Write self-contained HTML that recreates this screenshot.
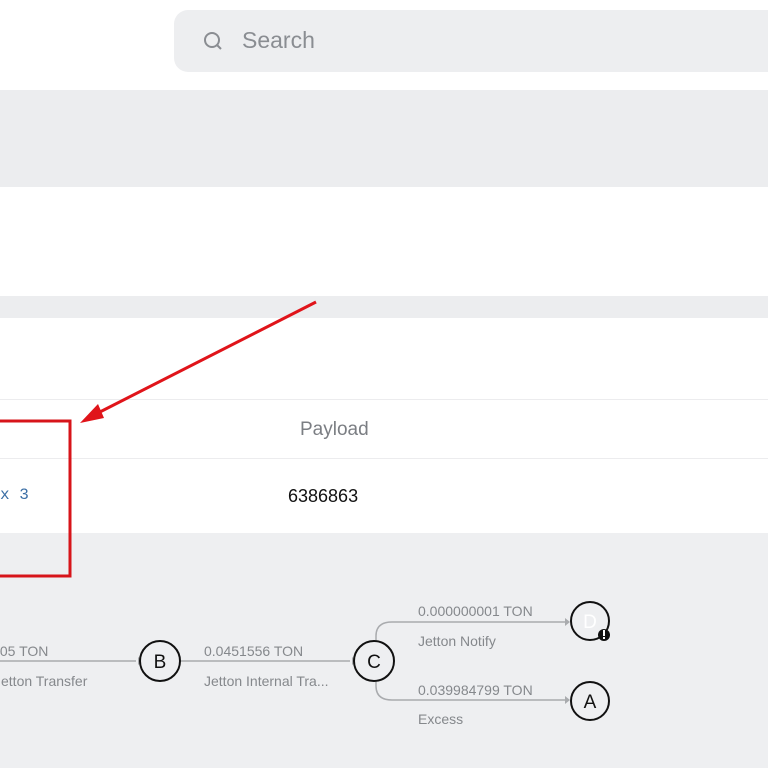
<!DOCTYPE html>
<html><head><style>
body{margin:0;width:768px;height:768px;overflow:hidden;background:#fff;font-family:"Liberation Sans",sans-serif;position:relative}
.a{position:absolute}
</style></head><body>
<div class="a" style="left:174px;top:10px;width:620px;height:62px;background:#edeef0;border-radius:14px"></div>
<svg class="a" style="left:202px;top:30px" width="22" height="22" viewBox="0 0 22 22"><circle cx="10" cy="10" r="7" fill="none" stroke="#8a8d92" stroke-width="2"/><line x1="15" y1="15" x2="19" y2="19" stroke="#8a8d92" stroke-width="2"/></svg>
<div class="a" style="left:242px;top:27px;font-size:23px;color:#8a8d92">Search</div>
<div class="a" style="left:0;top:90px;width:768px;height:97px;background:#ecedef"></div>
<div class="a" style="left:0;top:296px;width:768px;height:22px;background:#ecedef"></div>
<div class="a" style="left:0;top:399px;width:768px;height:1px;background:#ececee"></div>
<div class="a" style="left:0;top:458px;width:768px;height:1px;background:#ececee"></div>
<div class="a" style="left:300px;top:419px;font-size:19px;color:#7b7e83">Payload</div>
<div class="a" style="left:288px;top:486px;font-size:18px;color:#111">6386863</div>
<div class="a" style="left:0;top:486px;font-size:16px;color:#3a6ea5;font-family:'Liberation Mono',monospace">x&nbsp;3</div>
<div class="a" style="left:0;top:533px;width:768px;height:235px;background:#eeeff1"></div>
<svg class="a" style="left:0;top:0" width="768" height="768">
<g fill="none" stroke="#a9abae" stroke-width="1.5">
<line x1="0" y1="661" x2="136" y2="661"/><line x1="181" y1="661" x2="350" y2="661"/>
<path d="M376 645 L376 636 Q376 622 392 622 L566 622"/><path d="M376 677 L376 686 Q376 700 392 700 L566 700"/>
</g>
<g fill="#a9abae"><path d="M138 657l5 4-5 4z"/><path d="M352 657l5 4-5 4z"/><path d="M565 618l5 4-5 4z"/><path d="M565 696l5 4-5 4z"/></g>
<g fill="#eeeff1" stroke="#111" stroke-width="2"><circle cx="160" cy="661" r="20"/><circle cx="374" cy="661" r="20"/><circle cx="590" cy="621" r="19"/><circle cx="590" cy="701" r="19"/></g>
<circle cx="604" cy="635" r="6" fill="#111"/><rect x="603" y="630" width="2" height="6" fill="#fff"/><rect x="603" y="637" width="2" height="2" fill="#fff"/>
<g font-size="19" text-anchor="middle" fill="#111"><text x="160" y="668">B</text><text x="374" y="668">C</text><text x="590" y="708">A</text><text x="590" y="628" fill="#fff">D</text></g>
<g font-size="14" fill="#85888c"><text x="-4" y="656">.05 TON</text><text x="-6" y="686">Jetton Transfer</text><text x="204" y="656">0.0451556 TON</text><text x="204" y="686">Jetton Internal Tra...</text><text x="418" y="616">0.000000001 TON</text><text x="418" y="646">Jetton Notify</text><text x="418" y="695">0.039984799 TON</text><text x="418" y="724">Excess</text></g>
<rect x="-10" y="421" width="80" height="155" fill="none" stroke="#d7141a" stroke-width="3"/>
<line x1="316" y1="302" x2="92" y2="416" stroke="#e0141a" stroke-width="3"/>
<path d="M80 423 L98 404 L104 418 Z" fill="#e0141a"/>
</svg>
</body></html>
